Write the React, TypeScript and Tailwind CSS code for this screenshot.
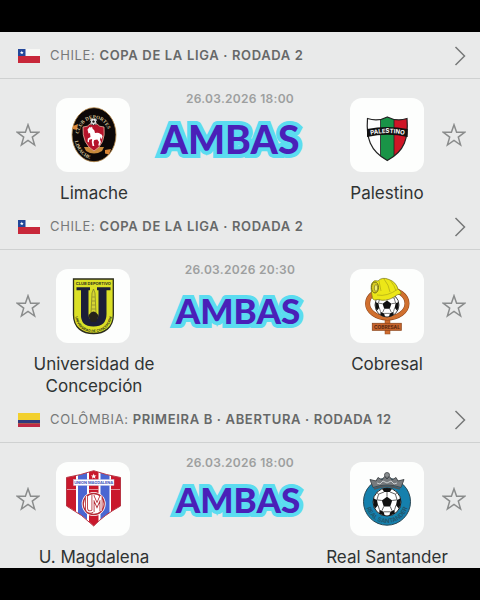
import type { ReactNode } from 'react';

type Team = { name: string; crest: ReactNode };
type Match = {
  country: string;
  flag: 'chile' | 'colombia';
  competition: string;
  date: string;
  home: Team;
  away: Team;
  stickerClass: string;
};

function Flag({ kind }: { kind: 'chile' | 'colombia' }) {
  return (
    <svg viewBox="0 0 22 14" className="h-3.5 w-[22px] shrink-0" aria-hidden="true">
      {kind === 'chile' ? (
        <>
          <rect width="22" height="14" fill="#f7f7f5" />
          <rect y="7" width="22" height="7" fill="#c8283a" />
          <rect width="7.5" height="7" fill="#24479a" />
          <path d="M3.8 1.6l.5 1.4h1.4l-1.1.9.4 1.4-1.2-.9-1.2.9.4-1.4-1.1-.9h1.4z" fill="#fff" />
        </>
      ) : (
        <>
          <rect width="22" height="14" fill="#f2d02e" />
          <rect y="7" width="22" height="3.5" fill="#2f3a7c" />
          <rect y="10.5" width="22" height="3.5" fill="#c02a45" />
        </>
      )}
    </svg>
  );
}

function Ball({ cx, cy, r }: { cx: number; cy: number; r: number }) {
  return (
    <g transform={`translate(${cx} ${cy}) scale(${r / 10})`}>
      <circle r="10" fill="#fff" stroke="#222" strokeWidth="0.7" />
      <path d="M0-3.8L3.7-1.1 2.3 3.2H-2.3L-3.7-1.1Z" fill="#111" />
      <path
        d="M-3.4-9.3Q0-10.7 3.4-9.3L2-7.2H-2ZM9.7-2.6Q10.2 1 8.6 4.9L6.4 2.3 7.2-1.5ZM-9.7-2.6Q-10.2 1-8.6 4.9L-6.4 2.3-7.2-1.5ZM5.5 8.3Q3.6 9.5 1.6 9.8L2.4 7 5.4 5.6ZM-5.5 8.3Q-3.6 9.5-1.6 9.8L-2.4 7-5.4 5.6Z"
        fill="#111"
      />
      <path
        d="M0-3.8V-7.2M3.7-1.1L7.2-1.5M2.3 3.2L3.6 6.2M-2.3 3.2L-3.6 6.2M-3.7-1.1L-7.2-1.5M2-7.2L6-5.6 7.2-1.5M-2-7.2L-6-5.6-7.2-1.5M6.4 2.3L5.4 5.6M-6.4 2.3L-5.4 5.6M2.4 7H-2.4M6-5.6L7.3-6.8M-6-5.6L-7.3-6.8"
        fill="none"
        stroke="#444"
        strokeWidth="0.6"
      />
    </g>
  );
}

function LimacheCrest() {
  return (
    <>
      <defs>
        <path id="limache-top" d="M22.5 37A15.8 20.5 0 0 1 53.5 37V52" />
        <path id="limache-bottom" d="M18.4 41A19.6 24.3 0 0 0 44 60" />
      </defs>
      <ellipse cx="38" cy="36.7" rx="22" ry="27" fill="#0d0808" stroke="#b98a4a" strokeWidth="0.8" />
      <path d="M17 28l5-2-1 6-4.500-1zM49 52l6-1-2 5.500-4-1z" fill="#d98636" />
      <path d="M30 53q8 5 16 0l2-4H28z" fill="#c98a3c" />
      <path d="M27 29q5 0 7-3h7q2 3 7 3 2 17-10 24Q26 46 27 29z" fill="#b5142b" stroke="#e2b8a0" strokeWidth="0.8" />
      <path
        d="M31.500 31.500L33.500 29l1.500.500 1-1 .5 2q2.500 1.500 2.500 4.500 3.500-1 5.500 1 1.800 0 2 2.500l-1 3-.8-2.500-.7 2.500 1 2.500-1.500 3.500h-1.300l.8-3.500-1.700-2.500-3 .5-.8 2 .8 4h-1.700l-.8-4 .3-3-3 .8-.2 2.700-1.400-1 .4-3 2.600-1.500-.5-4-1.500.5z"
        fill="#fff"
      />
      <Ball cx={37.5} cy={23.5} r={3.6} />
      <text className="font-[Liberation_Serif,serif]" fontSize="5" fontWeight="700" fill="#d8c49a">
        <textPath href="#limache-top" startOffset="1">CLUB DEPORTES</textPath>
      </text>
      <text className="font-[Liberation_Serif,serif]" fontSize="5" fontWeight="700" fill="#d8c49a">
        <textPath href="#limache-bottom" startOffset="2">LIMACHE</textPath>
      </text>
    </>
  );
}

function PalestinoCrest() {
  return (
    <>
      <defs>
        <clipPath id="palestino-shield">
          <path d="M17.500 20.500Q28 24 37.300 19 47 24 57 20.500C58.500 40 55 53 37.300 62.500 20 53 16 40 17.500 20.500Z" />
        </clipPath>
        <path id="palestino-name" d="M18 37.500Q37.500 32.500 57 37.500" />
      </defs>
      <g clipPath="url(#palestino-shield)">
        <rect x="15" y="17" width="16" height="47" fill="#fdfdfd" />
        <rect x="30.500" y="17" width="14" height="47" fill="#199447" />
        <rect x="44" y="17" width="15" height="47" fill="#cf1526" />
        <path d="M30.500 17v47M44 17v47" stroke="#222" strokeWidth="0.800" />
      </g>
      <path
        d="M17.500 20.500Q28 24 37.300 19 47 24 57 20.500C58.500 40 55 53 37.300 62.500 20 53 16 40 17.500 20.500Z"
        fill="none"
        stroke="#222"
        strokeWidth="1.200"
      />
      <path d="M17 31Q37.500 27 57.700 31V39Q37.500 34.500 17 39Z" fill="#111" />
      <text className="font-[Inter,sans-serif]" fontSize="6" fontWeight="700" fill="#fff">
        <textPath href="#palestino-name" startOffset="50%" textAnchor="middle">PALESTINO</textPath>
      </text>
    </>
  );
}

function ConcepcionCrest() {
  return (
    <>
      <defs>
        <path id="concepcion-arc" d="M19 46Q21 62.500 37.300 63.300 54 62.500 56 46" />
      </defs>
      <path d="M17.500 10H57.300V46C57.300 59 48 64.500 37.400 64.500S17.500 59 17.500 46Z" fill="#dbe026" stroke="#2b2c1c" strokeWidth="1.300" />
      <text x="37.400" y="16" textAnchor="middle" className="font-[Inter,sans-serif]" fontSize="4" fontWeight="700" fill="#33351a">
        CLUB DEPORTIVO
      </text>
      <path d="M20.500 18.300H34V21.300H32.500V45Q32.500 51 37.400 51T42.500 45V21.300H41V18.300H54.500V21.300H50.500V45Q50.500 57.500 37.400 57.500T25 45V21.300H20.500Z" fill="#1c1e38" />
      <path d="M36 24L37.500 20 39 24 40 44H35Z" fill="#d6d336" stroke="#77772a" strokeWidth="0.700" />
      <path d="M36.200 28h2.600M36 32h3M35.800 36h3.400M35.500 40h4" stroke="#77772a" strokeWidth="0.600" />
      <path d="M32.500 47Q34 43 37.500 42.500 41 43 42.500 47L40 53H35Z" fill="#25221a" />
      <text className="font-[Inter,sans-serif]" fontSize="3.400" fontWeight="700" fill="#33351a">
        <textPath href="#concepcion-arc" startOffset="50%" textAnchor="middle">UNIVERSIDAD DE CONCEPCION</textPath>
      </text>
    </>
  );
}

function CobresalCrest() {
  return (
    <>
      <rect x="35" y="48" width="5" height="17" fill="#cf6c2f" stroke="#8d451b" strokeWidth="0.500" />
      <ellipse cx="37.300" cy="34.500" rx="19.700" ry="14.500" fill="#fff" stroke="#8d451b" strokeWidth="5" />
      <ellipse cx="37.300" cy="34.500" rx="19.700" ry="14.500" fill="none" stroke="#d0702f" strokeWidth="4" />
      <Ball cx={37} cy={36} r={12} />
      <path
        d="M22.500 29.500Q20 17 22 14 24 10.500 28 12 32 7.500 39 10.500 46 13 48 20 52 23 51 25 47 25 44 28 36 33 28 30.500 24 32 22.500 29.500Z"
        fill="#ece718"
        stroke="#77731b"
        strokeWidth="0.700"
      />
      <path d="M29 12L31 22M34 10Q39 16 40 23M40 11Q45 17 46 22M27 26Q37 28 48 20" fill="none" stroke="#b5ae16" strokeWidth="0.800" />
      <ellipse cx="25" cy="18.500" rx="3.500" ry="5.500" fill="#d8cc20" stroke="#686319" strokeWidth="0.900" />
      <ellipse cx="26" cy="19" rx="1.700" ry="3.300" fill="#f2ef72" stroke="#686319" strokeWidth="0.600" />
      <rect x="22.300" y="54.300" width="29" height="7" fill="#c8652d" stroke="#8d451b" strokeWidth="0.800" />
      <text x="37" y="59.700" textAnchor="middle" className="font-[Inter,sans-serif]" fontSize="4.800" fontWeight="700" fill="#532510">
        COBRESAL
      </text>
    </>
  );
}

function MagdalenaCrest() {
  return (
    <>
      <defs>
        <clipPath id="magdalena-shield">
          <path d="M10.500 15.500Q25 13 37.700 8.700 50 13 64.500 15.500V44Q48 53 37.700 64 27 53 10.500 44Z" />
        </clipPath>
      </defs>
      <g clipPath="url(#magdalena-shield)">
        <rect x="9" y="7" width="57" height="58" fill="#fff" />
        <path d="M9 7h11v58H9zM33 7h9.500v58H33zM55 7h11v58H55z" fill="#c9182c" />
        <path d="M22 7h9v58h-9zM44.500 7h9v58h-9z" fill="#4a66d2" />
        <path d="M10 27.500h10M33 27.500h9.500M55 27.500h10" stroke="#eec6cb" strokeWidth="0.700" />
      </g>
      <path d="M10.500 15.500Q25 13 37.700 8.700 50 13 64.500 15.500V44Q48 53 37.700 64 27 53 10.500 44Z" fill="none" stroke="#b83645" strokeWidth="1" />
      <path d="M37.700 11.500l.8 2h2l-1.600 1.200.6 2-1.800-1.200-1.800 1.200.6-2-1.600-1.200h2z" fill="#fff" />
      <rect x="17.500" y="17.500" width="40.500" height="6" fill="#fff" stroke="#b7bfe0" strokeWidth="0.400" />
      <text x="37.700" y="22" textAnchor="middle" className="font-[Inter,sans-serif]" fontSize="3.900" fontWeight="700" fill="#3c54bb">
        UNION MAGDALENA
      </text>
      <circle cx="37.700" cy="42" r="11" fill="#fff" stroke="#fff" strokeWidth="2" />
      <circle cx="37.700" cy="42" r="10.500" fill="none" stroke="#b52d37" strokeWidth="1.300" />
      <path d="M30.500 34V46Q30.500 50 34 50T37 46V33M37 50V34L41 43 45 34V49" fill="none" stroke="#b52d37" strokeWidth="3" />
      <path d="M30.500 34V46Q30.500 50 34 50T37 46V33M37 50V34L41 43 45 34V49" fill="none" stroke="#fff" strokeWidth="1.300" />
    </>
  );
}

function SantanderCrest() {
  return (
    <>
      <defs>
        <path id="santander-arc" d="M16.500 33A21.500 21.500 0 1 0 57.500 33" />
      </defs>
      <circle cx="37" cy="39.700" r="23.500" fill="#1580ad" stroke="#294754" strokeWidth="1" />
      <text className="font-[Inter,sans-serif]" fontSize="6" fontWeight="700" fill="#23566c">
        <textPath href="#santander-arc" startOffset="50%" textAnchor="middle">REAL SANTANDER</textPath>
      </text>
      <Ball cx={37} cy={40} r={14} />
      <path
        d="M23 25.500L20 17.500 26 19 28 15.500 32 18 34.500 14.500 37 17 39.500 14.500 42 18 46 15.500 48 19 54 17.500 51 25.500Q37 20.500 23 25.500Z"
        fill="#777b7e"
        stroke="#3f4447"
        strokeWidth="0.900"
      />
      <circle cx="37" cy="13" r="2.500" fill="#8a8e90" stroke="#3f4447" strokeWidth="0.800" />
      <path d="M27 21l3 1 3-3 4 2 4-2 3 3 3-1" fill="none" stroke="#d4d7d8" strokeWidth="0.900" />
      <path d="M24 27Q37 21.500 50 27" fill="none" stroke="#50575b" strokeWidth="1.800" />
    </>
  );
}

const matches: Match[] = [
  {
    country: 'CHILE:',
    flag: 'chile',
    competition: 'COPA DE LA LIGA · RODADA 2',
    date: '26.03.2026 18:00',
    home: { name: 'Limache', crest: <LimacheCrest /> },
    away: { name: 'Palestino', crest: <PalestinoCrest /> },
    stickerClass: 'mt-2 pr-5 text-[39px]',
  },
  {
    country: 'CHILE:',
    flag: 'chile',
    competition: 'COPA DE LA LIGA · RODADA 2',
    date: '26.03.2026 20:30',
    home: { name: 'Universidad de Concepción', crest: <ConcepcionCrest /> },
    away: { name: 'Cobresal', crest: <CobresalCrest /> },
    stickerClass: 'mt-2 pr-1 text-[35px]',
  },
  {
    country: 'COLÔMBIA:',
    flag: 'colombia',
    competition: 'PRIMEIRA B · ABERTURA · RODADA 12',
    date: '26.03.2026 18:00',
    home: { name: 'U. Magdalena', crest: <MagdalenaCrest /> },
    away: { name: 'Real Santander', crest: <SantanderCrest /> },
    stickerClass: 'mt-1 pr-1 text-[35px]',
  },
];

function Star({ team, className = '' }: { team: string; className?: string }) {
  return (
    <button
      type="button"
      aria-label={`Favoritar ${team}`}
      className={`mt-2 flex h-[74px] w-14 shrink-0 items-center justify-center ${className}`}
    >
      <svg viewBox="0 0 24 24" className="size-6" fill="none" stroke="#8a8c8c" strokeWidth="1.5" aria-hidden="true">
        <path d="M12 1.800L14.600 9.300H22.600L16.300 14.100 18.600 22 12 17.300 5.400 22 7.700 14.100 1.400 9.300H9.400Z" />
      </svg>
    </button>
  );
}

function Crest({ children }: { children: ReactNode }) {
  return (
    <div className="mt-2 size-[74px] shrink-0 rounded-xl bg-[#fdfefd]">
      <svg viewBox="0 0 74 74" className="size-full" aria-hidden="true">
        {children}
      </svg>
    </div>
  );
}

function MatchBlock({ match }: { match: Match }) {
  return (
    <section>
      <a href="#competicao" className="flex h-[45px] items-center pr-3.5 pl-[18px] text-[13px] tracking-wider">
        <Flag kind={match.flag} />
        <span className="ml-2.5 text-[#777979]">{match.country}</span>
        <span className="ml-1 flex-1 font-semibold whitespace-nowrap text-[#666868]">{match.competition}</span>
        <svg viewBox="0 0 12 20" className="h-5 w-3" fill="none" stroke="#777979" strokeWidth="1.5" aria-hidden="true">
          <path d="M1.500 1L10.500 10 1.500 19" />
        </svg>
      </a>
      <div className="flex items-start border-t border-[#cfd1d1] pt-[11px]">
        <Star team={match.home.name} />
        <Crest>{match.home.crest}</Crest>
        <div className="flex-1 text-center">
          <time className="block text-[12px] leading-[18px] font-semibold tracking-wide text-[#9d9f9f]">{match.date}</time>
          <strong
            className={`block font-[Lato,sans-serif] leading-[46px] font-black text-[#4a20b8] [-webkit-text-stroke:8px_#5bdcf0] [paint-order:stroke_fill] ${match.stickerClass}`}
          >
            AMBAS
          </strong>
        </div>
        <Crest>{match.away.crest}</Crest>
        <Star team={match.away.name} className="pl-1" />
      </div>
      <div className="flex justify-between pt-2.5 pr-[23px] pl-6 text-center text-[17px] leading-[22px] text-[#2f3333]">
        <h2 className="w-[140px]">{match.home.name}</h2>
        <h2 className="w-[140px]">{match.away.name}</h2>
      </div>
    </section>
  );
}

export default function App() {
  return (
    <main className="min-h-screen bg-black py-8 font-[Inter,sans-serif]">
      <div className="bg-[#e9eaea] pt-px">
        {matches.map((match) => (
          <MatchBlock key={match.home.name} match={match} />
        ))}
      </div>
    </main>
  );
}
